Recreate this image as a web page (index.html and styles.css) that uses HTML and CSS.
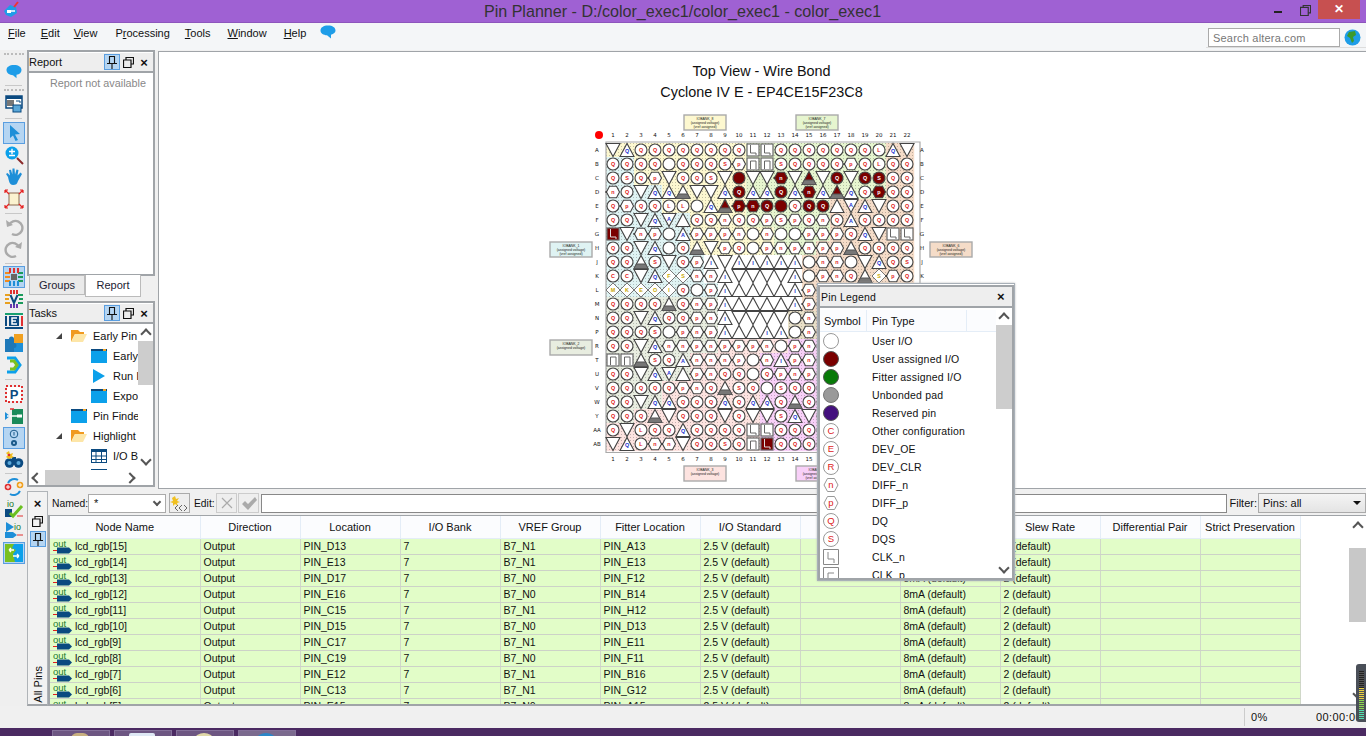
FILE: index.html
```html
<!DOCTYPE html>
<html lang="en">
<head>
<meta charset="utf-8">
<title>Pin Planner</title>
<link rel="stylesheet" href="styles.css">
</head>
<body>
<header class="titlebar">
  <svg class="app-logo" width="18" height="18" viewBox="0 0 18 18"><path d="M2 10 L8 4 L14 6 L15 12 L9 16 L4 14Z" fill="#1e9de8"/><rect x="5" y="9" width="4" height="3" fill="#fff"/><path d="M9 10h4" stroke="#fff" stroke-width="1.5"/><path d="M12 6 L16 1" stroke="#e33" stroke-width="2"/></svg>
  <div class="title-text">Pin Planner - D:/color_exec1/color_exec1 - color_exec1</div>
  <div class="win-btns">
    <span class="win-min"></span>
    <svg class="win-restore" width="11" height="11" viewBox="0 0 12 12"><path d="M3.5 2.5V.5h8v8h-2M.5 2.500h8.500v9h-8.500z" fill="none" stroke="#333" stroke-width="1.300"/></svg>
    <span class="win-close">✕</span>
  </div>
</header>

<nav class="menubar">
  <span class="menu-item"><u>F</u>ile</span>
  <span class="menu-item"><u>E</u>dit</span>
  <span class="menu-item"><u>V</u>iew</span>
  <span class="menu-item">P<u>r</u>ocessing</span>
  <span class="menu-item"><u>T</u>ools</span>
  <span class="menu-item"><u>W</u>indow</span>
  <span class="menu-item"><u>H</u>elp</span>
  <svg class="chat" width="16" height="14" viewBox="0 0 16 14"><path d="M8 .5C3.500.5.500 2.500.500 5.500S3.500 10 7 10.300L11 13.500V9.800C13.800 9 15.500 7.500 15.500 5.500 15.500 2.500 12.500.5 8 .5Z" fill="#1e9de8"/></svg>
  <div class="search-wrap">
    <div class="search-box">Search altera.com</div>
    <svg width="17" height="17" viewBox="0 0 17 17"><circle cx="8.500" cy="8.500" r="8" fill="#1e9de8"/><path d="M5 3 L11 2 L12 6 L9 8 L10 12 L8 14 L6 9 L3 7Z" fill="#3c9a2e"/></svg>
  </div>
</nav>

<div class="workspace">
  <aside class="toolbar">
    <div class="grip"></div>
    <div class="tool"><svg viewBox="0 0 20 20"><path d="M10 4C5.500 4 2.500 6 2.500 9s3 5 6.500 5.300l3.500 3v-3.600C15.500 13.500 17.500 11.500 17.500 9c0-3-3-5-7.500-5Z" fill="#1e9de8"/></svg></div>
    <div class="sep"></div>
    <div class="grip g2"></div>
    <div class="tool"><svg viewBox="0 0 20 20"><rect x="2" y="2" width="16" height="12" fill="#fff" stroke="#0b4a80" stroke-width="1.500"/><rect x="2" y="2" width="16" height="3" fill="#0b4a80"/><rect x="3" y="6" width="7" height="6" fill="#777"/><rect x="9" y="11" width="8" height="7" fill="#5aa7d8" stroke="#0b4a80"/><path d="M12 7h4v2" fill="none" stroke="#0b4a80"/></svg></div>
    <div class="sep w7"></div>
    <div class="tool on"><svg viewBox="0 0 20 20"><path d="M6 2 L16 11 L11 11.500 L14 17 L11.500 18 L9 12.500 L6 15Z" fill="#1e8fd8"/></svg></div>
    <div class="tool"><svg viewBox="0 0 20 20"><circle cx="8" cy="8" r="6.500" fill="#0ca0ea"/><path d="M5 6.500h6M8 3.800v5.400M5 10.500h6" stroke="#fff" stroke-width="1.400"/><path d="M13 13 L19 19" stroke="#8a2a2a" stroke-width="2"/></svg></div>
    <div class="tool"><svg viewBox="0 0 20 20"><path d="M4 10 L2 7 L3.500 6 L6 8.500 L5 3 L7 2.800 L8.300 7.500 L8.500 1.500 L10.500 1.500 L11 7.500 L12.500 2.500 L14.500 3 L13.500 8.500 L16.500 5.500 L18 7 L14 14 C13 17 12 18 9 18 C6 18 5 15 4 10Z" fill="#1e8fd8"/></svg></div>
    <div class="tool"><svg viewBox="0 0 20 20"><rect x="5" y="4" width="10" height="12" fill="#fbf3d0" stroke="#8a6a50"/><path d="M1 1l4 4M1 1h3M1 1v3M19 1l-4 4M19 1h-3M19 1v3M1 19l4-4M1 19h3M1 19v-3M19 19l-4-4M19 19h-3M19 19v-3" stroke="#e52222" fill="none" stroke-width="1.200"/></svg></div>
    <div class="sep"></div>
    <div class="tool"><svg viewBox="0 0 20 20"><path d="M5 8 A7 7 0 1 1 8 17" fill="none" stroke="#aaa" stroke-width="2.400"/><path d="M2 3 L3 10 L9 8Z" fill="#aaa"/></svg></div>
    <div class="tool"><svg viewBox="0 0 20 20"><path d="M15 8 A7 7 0 1 0 12 17" fill="none" stroke="#aaa" stroke-width="2.400"/><path d="M18 3 L17 10 L11 8Z" fill="#aaa"/></svg></div>
    <div class="sep"></div>
    <div class="tool on"><svg viewBox="0 0 20 20"><rect x="7" y="7" width="6" height="6" fill="#666"/><path d="M1 6h5M1 10h5M1 14h5" stroke="#f08a1e" stroke-width="2"/><path d="M14 6h5M14 10h5M14 14h5" stroke="#1a9a5a" stroke-width="2"/><path d="M6 1v5M10 1v5M14 1v5" stroke="#e03030" stroke-width="2"/><path d="M6 14v5M10 14v5M14 14v5" stroke="#1e8fd8" stroke-width="2"/></svg></div>
    <div class="tool"><svg viewBox="0 0 20 20"><path d="M1 6h5M1 10h4M1 14h5" stroke="#e8a020" stroke-width="2"/><path d="M14 6h5M15 10h4M14 14h5" stroke="#1a9a5a" stroke-width="2"/><path d="M7 1v4M10 1v4M13 1v4" stroke="#e03030" stroke-width="2"/><path d="M7 15v4M10 15v4M13 15v4" stroke="#6a3ab0" stroke-width="2"/><path d="M6.500 6 L10 14 L13.500 6" fill="none" stroke="#0b4a80" stroke-width="2"/></svg></div>
    <div class="tool"><svg viewBox="0 0 20 20"><rect x="1" y="2" width="18" height="2" fill="#18a070"/><rect x="1" y="16" width="18" height="2" fill="#0b4a80"/><rect x="1" y="5" width="2" height="10" fill="#0b4a80"/><rect x="17" y="5" width="2" height="10" fill="#e03030"/><rect x="5" y="5" width="10" height="10" fill="#0b4a80"/><path d="M13 7H8v6h5M8 10h4" fill="none" stroke="#fff" stroke-width="1.500"/></svg></div>
    <div class="tool"><svg viewBox="0 0 20 20"><rect x="10" y="1" width="9" height="9" fill="#f0a020"/><rect x="10" y="10" width="9" height="9" fill="#1e8fd8"/><path d="M1 6h4a2.500 2.500 0 0 1 5 0h0v4a2.500 2.500 0 0 1 0 5v4H1Z" fill="#1e78b8"/></svg></div>
    <div class="tool"><svg viewBox="0 0 20 20"><path d="M3 3h8l5 7-5 7H3" fill="none" stroke="#0ca0ea" stroke-width="3"/><path d="M6 6h4l3 4-3 4H6" fill="none" stroke="#7ac020" stroke-width="3"/></svg></div>
    <div class="sep w7"></div>
    <div class="tool"><svg viewBox="0 0 20 20"><rect x="3" y="3" width="14" height="14" fill="#fff"/><path d="M2 2h16v16H2z" fill="none" stroke="#e03030" stroke-dasharray="2 2" stroke-width="2"/><text x="10" y="15" class="ico-p">P</text></svg></div>
    <div class="tool"><svg viewBox="0 0 20 20"><rect x="8" y="3" width="11" height="15" fill="#1a8a5a"/><path d="M1 6l5 4-5 4z" fill="#1e8fd8"/><path d="M3 10h13" stroke="#fff" stroke-width="1.500"/><rect x="13" y="8.500" width="5" height="3" fill="#fff"/><path d="M6 3h4" stroke="#e03030" stroke-width="1.500"/></svg></div>
    <div class="tool on"><svg viewBox="0 0 20 20"><circle cx="10" cy="6" r="3.800" fill="none" stroke="#1a5a8a"/><path d="M10 4v3.500" stroke="#1a5a8a"/><circle cx="10" cy="15" r="3" fill="#1a5a8a"/><circle cx="10" cy="15" r="1" fill="#b5d5f2"/></svg></div>
    <div class="tool"><svg viewBox="0 0 20 20"><circle cx="5.500" cy="13" r="4.800" fill="#0b4a80"/><circle cx="14.500" cy="13" r="4.800" fill="#0b4a80"/><circle cx="5.500" cy="13" r="2" fill="#5aa7d8"/><circle cx="14.500" cy="13" r="2" fill="#5aa7d8"/><rect x="8" y="7" width="4" height="6" fill="#0b4a80"/><path d="M5 1l1 3 3-1-1 3 2 1-5 2-3-2 2-2-2-2z" fill="#f0c020"/><circle cx="5" cy="5" r="1.300" fill="#e03030"/></svg></div>
    <div class="sep short"></div>
    <div class="tool"><svg viewBox="0 0 20 20"><path d="M4 6 A7 7 0 0 1 14 3" fill="none" stroke="#1e8fd8" stroke-width="2"/><path d="M16 14 A7 7 0 0 1 6 17" fill="none" stroke="#1e8fd8" stroke-width="2"/><circle cx="4" cy="10" r="3.300" fill="#e03030"/><path d="M2 10h4M4 8v4" stroke="#fff"/><circle cx="16" cy="8" r="3.300" fill="#f0a020"/><path d="M14 8h4M16 6v4" stroke="#fff"/></svg></div>
    <div class="tool"><svg viewBox="0 0 20 20"><text x="3" y="8" class="ico-io">io</text><path d="M1 10h7v8H1z" fill="#0b4a80"/><path d="M6 14 L9 17 L18 7" fill="none" stroke="#6ac020" stroke-width="3"/><path d="M13 17h6" stroke="#e03030"/></svg></div>
    <div class="tool"><svg viewBox="0 0 20 20"><path d="M2 1l8 5-8 5z" fill="#1e8fd8"/><text x="10" y="9" class="ico-io">io</text><path d="M1 11h8l4 3-4 3H1z" fill="#1e8fd8"/><path d="M13 14h6" stroke="#e03030"/></svg></div>
    <div class="tool on"><svg viewBox="0 0 20 20"><rect x="1" y="1" width="18" height="18" fill="#0ca0ea"/><path d="M1 1h9l-2 4 4 2-3 4 2 8H1z" fill="#7ac020"/><path d="M10 7H5M5 7l2-2M5 7l2 2M9 13h6M15 13l-2-2M15 13l-2 2" stroke="#fff" stroke-width="1.300" fill="none"/></svg></div>
  </aside>

  <div class="main">
    <div class="upper">
      <div class="leftcol">
        <section class="panel report">
          <div class="panel-head">
            <span class="panel-title">Report</span>
            <span class="pb on"><svg width="10" height="14" viewBox="0 0 10 14"><path d="M2.500 1.500h5v7h-5zM0 8.500h10M5 8.500V14" fill="none" stroke="#111" stroke-width="1.100"/></svg></span>
            <span class="pb"><svg width="11" height="11" viewBox="0 0 11 11"><path d="M3 3V.5h7.500V7H8M.5 3h7.500v7.500H.5z" fill="none" stroke="#111" stroke-width="1.200"/></svg></span>
            <span class="pb close">×</span>
          </div>
          <div class="report-body">Report not available</div>
        </section>
        <div class="tabs"><span class="tab">Groups</span><span class="tab active">Report</span></div>
        <section class="panel tasks">
          <div class="panel-head">
            <span class="panel-title">Tasks</span>
            <span class="pb on"><svg width="10" height="14" viewBox="0 0 10 14"><path d="M2.500 1.500h5v7h-5zM0 8.500h10M5 8.500V14" fill="none" stroke="#111" stroke-width="1.100"/></svg></span>
            <span class="pb"><svg width="11" height="11" viewBox="0 0 11 11"><path d="M3 3V.5h7.500V7H8M.5 3h7.500v7.500H.5z" fill="none" stroke="#111" stroke-width="1.200"/></svg></span>
            <span class="pb close">×</span>
          </div>
          <div class="tree-area">
            <div class="tree-view">
              <div class="tree-list">
                <div class="tree-row lvl1"><span class="tw"></span><svg class="ti" viewBox="0 0 16 14"><path d="M0 1h7l2 2h4v2H4L0 13z" fill="#f09a20"/><path d="M4 5h12l-4 8H0z" fill="#fde6a8"/></svg><span>Early Pin Planning</span></div>
                <div class="tree-row lvl2"><svg class="ti" viewBox="0 0 16 14"><rect width="16" height="14" fill="#0ca0ea"/><rect width="16" height="2" fill="#0b4a80"/><rect x="12" width="3" height="2" fill="#f0a020"/></svg><span>Early Pin</span></div>
                <div class="tree-row lvl2"><svg class="ti" viewBox="0 0 16 14"><path d="M2 0 L14 7 L2 14Z" fill="#0ca0ea"/></svg><span>Run I/O</span></div>
                <div class="tree-row lvl2"><svg class="ti" viewBox="0 0 16 14"><rect width="16" height="14" fill="#0ca0ea"/><rect width="16" height="2" fill="#0b4a80"/><rect x="12" width="3" height="2" fill="#f0a020"/></svg><span>Export</span></div>
                <div class="tree-row lvl1b"><svg class="ti" viewBox="0 0 16 14"><rect width="16" height="14" fill="#0ca0ea"/><rect width="16" height="2" fill="#0b4a80"/><rect x="12" width="3" height="2" fill="#f0a020"/></svg><span>Pin Finder</span></div>
                <div class="tree-row lvl1"><span class="tw"></span><svg class="ti" viewBox="0 0 16 14"><path d="M0 1h7l2 2h4v2H4L0 13z" fill="#f09a20"/><path d="M4 5h12l-4 8H0z" fill="#fde6a8"/></svg><span>Highlight Pins</span></div>
                <div class="tree-row lvl2"><svg class="ti" viewBox="0 0 16 14"><rect x=".5" y=".5" width="15" height="13" fill="#fff" stroke="#0b4a80"/><rect width="16" height="3" fill="#0b4a80"/><path d="M0 7h16M0 10.500h16M5 3v11M10.500 3v11" stroke="#0b4a80"/></svg><span>I/O Banks</span></div>
                <div class="tree-row lvl2"><svg class="ti" viewBox="0 0 16 14"><rect width="16" height="2" fill="#0b4a80"/></svg><span>VREF</span></div>
              </div>
              <div class="vbar"><span class="arr"></span><span class="thumb"></span><span class="fill"></span><span class="arr dn"></span></div>
            </div>
            <div class="hbar"><span class="harr"></span><span class="hthumb"></span><span class="hfill"></span><span class="harr rt"></span></div>
          </div>
        </section>
      </div>
      <section class="canvas">
        <div class="canvas-title">Top View - Wire Bond</div>
        <div class="canvas-title">Cyclone IV E - EP4CE15F23C8</div>
        <svg id="pkg" class="pkg" width="440" height="380" viewBox="543 105 440 380"></svg>
      </section>
    </div>

    <section class="lower">
      <div class="side">
        <span class="pb close">×</span>
        <span class="pb"><svg width="11" height="11" viewBox="0 0 11 11"><path d="M3 3V.5h7.500V7H8M.5 3h7.500v7.500H.5z" fill="none" stroke="#111" stroke-width="1.200"/></svg></span>
        <span class="pb on"><svg width="10" height="14" viewBox="0 0 10 14"><path d="M2.500 1.500h5v7h-5zM0 8.500h10M5 8.500V14" fill="none" stroke="#111" stroke-width="1.100"/></svg></span>
        <span class="all-pins">All Pins</span>
      </div>
      <div class="lower-main">
        <div class="filterbar">
          <span class="lbl named">Named:</span>
          <div class="combo"><span>*</span><span class="chev"></span></div>
          <span class="fbtn wiz"><svg width="19" height="17" viewBox="0 0 19 17"><path d="M5 1l1 3 3-1-2 3 3 1-3 1 1 3-3-2-2 2V8L0 7l3-1-1-3z" fill="#f0c020"/><path d="M8 10l-3 3 3 3M12 10l-3 3 3 3M14 10l3 3-3 3" fill="none" stroke="#666"/></svg></span>
          <span class="lbl edit">Edit:</span>
          <span class="fbtn dim"><svg width="14" height="14" viewBox="0 0 14 14"><path d="M2 2l10 10M12 2L2 12" stroke="#aaa" stroke-width="1.200"/></svg></span>
          <span class="fbtn dim"><svg width="16" height="14" viewBox="0 0 16 14"><path d="M1 8l3-3 3 3 7-7 2 3-9 10z" fill="#aaa"/></svg></span>
          <div class="edit-input"></div>
          <span class="lbl">Filter:</span>
          <div class="filter-select"><span>Pins: all</span><span class="caret"></span></div>
        </div>
        <div class="grid-wrap">
          <div class="grid-area">
            <table class="grid">
              <thead><tr><th>Node Name</th><th>Direction</th><th>Location</th><th>I/O Bank</th><th>VREF Group</th><th>Fitter Location</th><th>I/O Standard</th><th>Reserved</th><th>Current Strength</th><th>Slew Rate</th><th>Differential Pair</th><th>Strict Preservation</th></tr></thead>
              <tbody id="rows"></tbody>
            </table>
          </div>
          <div class="vbar big"><span class="arr"></span><span class="thumb"></span><span class="fill"></span><span class="arr dn"></span></div>
        </div>
      </div>
    </section>

    <div class="legend">
      <div class="legend-head"><span>Pin Legend</span><span class="pb close">×</span></div>
      <div class="legend-body">
        <div class="legend-list">
          <div class="legend-cols"><span class="lc1">Symbol</span><span class="lc2">Pin Type</span><span class="lc3"></span></div>
          <div class="lr"><span class="sym"></span>User I/O</div>
          <div class="lr"><span class="sym s-red"></span>User assigned I/O</div>
          <div class="lr"><span class="sym s-green"></span>Fitter assigned I/O</div>
          <div class="lr"><span class="sym s-gray"></span>Unbonded pad</div>
          <div class="lr"><span class="sym s-purple"></span>Reserved pin</div>
          <div class="lr"><span class="sym">C</span>Other configuration</div>
          <div class="lr"><span class="sym">E</span>DEV_OE</div>
          <div class="lr"><span class="sym">R</span>DEV_CLR</div>
          <div class="lr"><span class="sym hex"><svg viewBox="0 0 16 16"><path d="M1 8l3.500-6.500h7L15 8l-3.500 6.500h-7z" fill="#fff" stroke="#999"/></svg><b>n</b></span>DIFF_n</div>
          <div class="lr"><span class="sym hex"><svg viewBox="0 0 16 16"><path d="M1 8l3.500-6.500h7L15 8l-3.500 6.500h-7z" fill="#fff" stroke="#999"/></svg><b>p</b></span>DIFF_p</div>
          <div class="lr"><span class="sym">Q</span>DQ</div>
          <div class="lr"><span class="sym">S</span>DQS</div>
          <div class="lr"><span class="sym hex"><svg viewBox="0 0 16 16"><path d="M.5.5h15v15H.5zM5 3v7h6v4" fill="none" stroke="#888"/></svg></span>CLK_n</div>
          <div class="lr"><span class="sym hex"><svg viewBox="0 0 16 16"><path d="M.5.5h15v15H.5zM5 14V6h6" fill="none" stroke="#888"/></svg></span>CLK_p</div>
        </div>
        <div class="vbar leg"><span class="arr"></span><span class="thumb"></span><span class="fill"></span><span class="arr dn"></span></div>
      </div>
    </div>
  </div>
</div>

<footer class="statusbar"><span class="pct">0%</span><span class="time">00:00:00</span></footer>
<div class="taskbar"><span class="task"></span><span class="task"></span><span class="task"></span><span class="task cur"></span></div>
<div class="meter"><span class="m-dark"></span><span class="m-yellow"></span><span class="m-green"></span><span class="m-cyan"></span></div>
<script src="pins.js"></script>
</body>
</html>
```
FILE: styles.css
```css
* { box-sizing: border-box; }
html, body { margin: 0; height: 736px; }
body { position: relative; width: 1366px; overflow: hidden; background: #f0f0f0; font: 11px "Liberation Sans", Arial, sans-serif; color: #111; display: flex; flex-direction: column; }

.titlebar { height: 23px; background: #9f61d3; border-bottom: 1px solid #8d55bd; display: flex; align-items: center; flex: none; }
.app-logo { margin-left: 2px; flex: none; margin-top: -2px; }
.title-text { flex: 1; text-align: center; font-size: 16.100px; color: #333; padding-left: 71px; }
.win-btns { display: flex; align-items: flex-start; height: 22px; width: 92px; flex: none; }
.win-min { width: 8px; height: 2px; background: #222; margin: 11px 18px 0 0; flex: none; }
.win-restore { margin: 5px 7px 0 0; flex: none; }
.win-close { width: 42px; height: 19px; background: #c75050; color: #fff; text-align: center; font-size: 12px; line-height: 19px; font-weight: bold; flex: none; }

.menubar { height: 27px; background: #f4f6f8; display: flex; align-items: center; flex: none; padding-left: 8px; padding-bottom: 8px; }
.menu-item:nth-child(1) { margin-right: 15px; }
.menu-item:nth-child(2) { margin-right: 14px; }
.menu-item:nth-child(3) { margin-right: 18px; }
.menu-item:nth-child(4) { margin-right: 15px; }
.menu-item:nth-child(5) { margin-right: 17px; }
.menu-item:nth-child(6) { margin-right: 17px; }
.menu-item:nth-child(7) { margin-right: 16px; }
.chat { margin-top: -2px; margin-left: -2px; }
.search-wrap { margin-left: auto; display: flex; align-items: center; gap: 4px; padding: 2px 5px 0 2px; border-bottom: 1px solid #ddd; margin-top: 8px; }
.search-box { width: 132px; height: 19px; background: #fff; border: 1px solid #aaa; color: #777; padding: 3px 4px; letter-spacing: .2px; }

.workspace { position: relative; flex: none; height: 656px; display: flex; }
.toolbar { width: 27px; flex: none; display: flex; flex-direction: column; align-items: center; background: #efefef; padding-top: 1px; }
.grip { height: 7px; width: 20px; flex: none; border-top: 2px dotted #bbb; margin-top: 2px; }
.grip.g2 { height: 4px; margin-top: 1px; }
.tool { width: 22px; height: 22px; flex: none; display: flex; align-items: center; justify-content: center; border: 1px solid transparent; }
.tool svg { width: 20px; height: 20px; flex: none; }
.tool.on { background: #b5d5f2; border-color: #5a9ee0; }
.sep { height: 1px; width: 17px; background: #c8c8c8; margin: 3px 0 2px; flex: none; }
.sep.w7 { margin: 3px 0; }
.sep.short { margin: 2px 0; }
.ico-p { font: bold 13px "Liberation Sans", sans-serif; fill: #0b4a80; text-anchor: middle; }
.ico-io { font: 9px "Liberation Sans", sans-serif; fill: #1a7a2a; }

.main { flex: 1; display: flex; flex-direction: column; min-width: 0; }
.upper { height: 439px; display: flex; flex: none; }
.leftcol { width: 128px; flex: none; display: flex; flex-direction: column; margin-right: 3px; }
.panel { border: 2px solid #a0a4a8; background: #fff; display: flex; flex-direction: column; }
.panel-head { height: 21px; background: #eee; border-bottom: 2px solid #a0a4a8; display: flex; align-items: center; flex: none; border-top: 1px solid #fff; padding-right: 1px; }
.panel-title { flex: 1; }
.pb { width: 16px; height: 16px; display: flex; align-items: center; justify-content: center; flex: none; }
.pb.on { background: #b5d5f2; border: 1px solid #5a9ee0; }
.pb.close { font: bold 13px "Liberation Sans", sans-serif; }
.report { height: 226px; flex: none; }
.report-body { padding: 4px 7px 0 0; text-align: right; color: #888; font-size: 10.800px; }
.tabs { height: 24px; flex: none; display: flex; padding-left: 2px; align-items: flex-start; margin-top: -1px; }
.tab { width: 56px; height: 20px; background: #eaeaea; border: 1px solid #bbb; text-align: center; line-height: 18px; margin-top: 0; color: #223; }
.tab.active { background: #fff; height: 22px; border-top: 0; margin-top: 0; line-height: 21px; }
.tasks { height: 186px; flex: none; margin-top: 2px; }
.tree-area { flex: 1; display: flex; flex-direction: column; min-height: 0; }
.tree-view { flex: 1; display: flex; min-height: 0; }
.tree-list { flex: 1; overflow: hidden; padding-top: 2px; min-width: 0; }
.tree-row { height: 20px; display: flex; align-items: center; white-space: nowrap; }
.lvl1 { padding-left: 27px; }
.lvl1b { padding-left: 42px; }
.lvl2 { padding-left: 62px; }
.tw { width: 0; height: 0; border-left: 6px solid transparent; border-bottom: 6px solid #444; margin-right: 9px; }
.ti { width: 16px; height: 14px; flex: none; margin-right: 6px; }
.vbar { width: 15px; flex: none; display: flex; flex-direction: column; align-items: stretch; background: #fff; }
.arr { height: 17px; flex: none; display: flex; align-items: center; justify-content: center; }
.arr::before { content: ""; width: 6px; height: 6px; border-left: 2px solid #555; border-top: 2px solid #555; transform: rotate(45deg); margin-top: 3px; }
.arr.dn::before { transform: rotate(225deg); margin-top: -3px; }
.thumb { height: 44px; background: #cdcdcd; flex: none; }
.fill { flex: 1; }
.hbar { height: 15px; flex: none; display: flex; align-items: center; margin-right: 15px; }
.harr { width: 16px; height: 15px; flex: none; display: flex; align-items: center; justify-content: center; }
.harr::before { content: ""; width: 6px; height: 6px; border-left: 2px solid #555; border-top: 2px solid #555; transform: rotate(-45deg); }
.harr.rt::before { transform: rotate(135deg); }
.hthumb { width: 35px; height: 15px; background: #cdcdcd; }
.hfill { flex: 1; }
.canvas { flex: 1; background: #fff; border: 1px solid #a0a4a8; border-right: 0; margin-top: 1px; padding: 9px 2px 0 0; text-align: center; overflow: hidden; }
.canvas-title { font-size: 14.400px; line-height: 21px; color: #111; }
.pkg { display: block; margin: 3px auto 0; }

.lower { flex: 1; display: flex; min-height: 0; }
.side { width: 21px; flex: none; border: 1px solid #b0b4b8; border-bottom: 2px solid #a0a4a8; background: #f2f2f2; display: flex; flex-direction: column; align-items: center; padding-top: 3px; gap: 2px; margin-top: 2px; }
.all-pins { margin-top: auto; writing-mode: vertical-rl; transform: rotate(180deg); padding-top: 1px; }
.lower-main { flex: 1; display: flex; flex-direction: column; min-width: 0; }
.filterbar { height: 26px; display: flex; align-items: center; flex: none; padding: 2px 0 0 4px; }
.lbl { flex: none; }
.lbl.named { width: 36px; font-size: 10.300px; white-space: nowrap; }
.lbl.edit { margin: 0 2px 0 4px; width: 20px; font-size: 10.300px; }
.combo { width: 78px; height: 19px; background: #fff; border: 1px solid #aaa; display: flex; justify-content: space-between; padding: 2px 5px; align-items: center; flex: none; }
.chev { width: 6px; height: 6px; border-right: 2px solid #555; border-bottom: 2px solid #555; transform: rotate(45deg); margin-top: -3px; }
.fbtn { width: 21px; height: 20px; border: 1px solid #aaa; background: #eee; display: flex; align-items: center; justify-content: center; flex: none; }
.fbtn.wiz { margin-left: 3px; }
.fbtn.dim { border-color: #ccc; margin-right: 1px; }
.edit-input { flex: 1; height: 19px; background: #fff; border: 1px solid #888; margin: 0 3px 0 1px; }
.filter-select { width: 108px; height: 20px; background: linear-gradient(#f4f4f4, #e4e4e4); border: 1px solid #aaa; margin-left: 1px; display: flex; align-items: center; justify-content: space-between; padding: 0 4px; flex: none; }
.caret { border: 4px solid transparent; border-top: 4px solid #111; margin-top: 4px; }
.grid-wrap { flex: 1; min-height: 0; display: flex; background: #fff; border-top: 1px solid #a0a4a8; border-bottom: 2px solid #a0a4a8; border-left: 2px solid #a0a4a8; }
.grid-area { flex: 1; overflow: hidden; min-width: 0; }
.grid { table-layout: fixed; width: 1250px; border-collapse: collapse; }
.grid th { font-weight: normal; height: 22px; width: 100px; background: #fbfcfe; border-right: 1px solid #e4edf7; border-bottom: 1px solid #e4edf7; padding: 0; color: #111; }
.grid th:first-child { width: 150px; }
.grid td { height: 16px; padding: 0 3px; background: #e2fdc8; border-right: 1px solid #d0d8c8; border-bottom: 1px solid #cdd2c8; white-space: nowrap; overflow: hidden; font-size: 10.500px; }
.node { display: flex; align-items: center; height: 15px; }
.out-ico { width: 20px; height: 15px; flex: none; margin-right: 2px; }
.out-t { font: 9.500px "Liberation Sans", sans-serif; fill: #1a7a2a; }
.vbar.big { width: 17px; }
.vbar.big .thumb { height: 74px; background: #c8c8c8; margin-top: 14px; }
.vbar.big .arr { height: 18px; }

.legend { position: absolute; left: 817px; top: 233px; width: 198px; height: 298px; background: #fff; border: 1px solid #a8b0b8; padding: 1px 0 0; box-shadow: 0 0 2px #bbb; }
.legend-head { height: 21px; background: #eee; display: flex; align-items: center; justify-content: space-between; padding: 0 3px 0 1px; font-size: 10.500px; letter-spacing: .2px; border: 2px solid #a0a4a8; border-bottom: 0; }
.legend-body { display: flex; height: 274px; border: 2px solid #a0a4a8; }
.legend-list { flex: 1; overflow: hidden; min-width: 0; }
.legend-cols { height: 22px; display: flex; align-items: center; background: #fbfcfe; border-bottom: 1px solid #e4edf7; margin-top: 2px; }
.lc1 { width: 47px; padding-left: 4px; height: 100%; line-height: 22px; border-right: 1px solid #e4edf7; }
.lc2 { width: 100px; padding-left: 5px; height: 100%; line-height: 22px; border-right: 1px solid #e4edf7; }
.lr { height: 18px; display: flex; align-items: center; font-size: 10.500px; letter-spacing: .2px; padding-left: 3px; }
.sym { width: 16px; height: 16px; border-radius: 50%; border: 1px solid #999; color: #d22; text-align: center; font-size: 9.500px; line-height: 14px; margin-right: 33px; position: relative; flex: none; }
.s-red { background: #7a0000; border-color: #555; }
.s-green { background: #087a08; border-color: #555; }
.s-gray { background: #999; border-color: #777; }
.s-purple { background: #44107e; border-color: #555; }
.sym.hex { border: 0; border-radius: 0; }
.sym.hex svg { position: absolute; left: 0; top: 0; width: 16px; height: 16px; }
.sym.hex b { position: relative; font-weight: normal; line-height: 16px; }
.vbar.leg { width: 16px; }
.vbar.leg .thumb { height: 84px; }
.vbar.leg .arr { height: 17px; }

.statusbar { height: 22px; flex: none; background: #f0f0f0; display: flex; justify-content: flex-end; align-items: center; overflow: hidden; }
.pct { border-left: 1px solid #ccc; padding-left: 6px; width: 72px; line-height: 18px; letter-spacing: .4px; }
.time { width: 50px; white-space: nowrap; letter-spacing: .4px; overflow: hidden; }
.taskbar { flex: 1; background: #4b2a62; display: flex; gap: 4px; padding: 2px 0 0 52px; }
.task { width: 58px; background: #6d5682; border: 1px solid #84709a; border-bottom: 0; position: relative; overflow: hidden; }
.task::after { content: ""; position: absolute; left: 18px; top: 2px; width: 18px; height: 12px; border-radius: 6px 6px 0 0; background: #c8b080; }
.task:nth-child(2)::after { background: #dfe9f5; left: 14px; width: 26px; border-radius: 2px; }
.task:nth-child(3)::after { background: #e0d8a8; border-radius: 50%; }
.task.cur { background: #7b6a8e; }
.task.cur::after { background: #2a86c8; border-radius: 50%; }
.meter { position: absolute; left: 1356px; top: 664px; width: 10px; height: 58px; background: #4a4f58; border-radius: 3px 0 0 3px; display: flex; flex-direction: column; padding: 7px 2px 1px 3px; }
.m-dark { height: 17px; background: repeating-linear-gradient(#222 0 1px, #555 1px 2px); }
.m-yellow { height: 12px; background: repeating-linear-gradient(#e8d040 0 1px, #555 1px 2px); }
.m-green { height: 10px; background: repeating-linear-gradient(#8ad850 0 1px, #555 1px 2px); }
.m-cyan { height: 9px; background: repeating-linear-gradient(#50e0b0 0 1px, #555 1px 2px); }
.pl { font: bold 5.400px "Liberation Sans", sans-serif; text-anchor: middle; }
.ax { font: 5.500px "DejaVu Sans", sans-serif; text-anchor: middle; fill: #111; }
.bl { font: 3.500px "Liberation Sans", sans-serif; text-anchor: middle; fill: #222; }
```
FILE: pins.js
```js
var rowsData = [
  ["lcd_rgb[15]","PIN_D13","B7_N1","PIN_A13"],["lcd_rgb[14]","PIN_E13","B7_N1","PIN_E13"],
  ["lcd_rgb[13]","PIN_D17","B7_N0","PIN_F12"],["lcd_rgb[12]","PIN_E16","B7_N0","PIN_B14"],
  ["lcd_rgb[11]","PIN_C15","B7_N1","PIN_H12"],["lcd_rgb[10]","PIN_D15","B7_N0","PIN_D13"],
  ["lcd_rgb[9]","PIN_C17","B7_N1","PIN_E11"],["lcd_rgb[8]","PIN_C19","B7_N0","PIN_F11"],
  ["lcd_rgb[7]","PIN_E12","B7_N1","PIN_B16"],["lcd_rgb[6]","PIN_C13","B7_N1","PIN_G12"],
  ["lcd_rgb[5]","PIN_E15","B7_N0","PIN_A15"]
];
var outIco = '<svg class="out-ico" viewBox="0 0 20 15"><text x="0" y="7.500" class="out-t">out</text><path d="M0 11.500h4" stroke="#e02020"/><path d="M4 8.500h12l3 3-3 3H4z" fill="#0b4a80"/></svg>';
document.getElementById("rows").innerHTML = rowsData.map(function (r) {
  return "<tr><td><div class='node'>" + outIco + r[0] + "</div></td><td>Output</td><td>" + r[1] +
    "</td><td>7</td><td>" + r[2] + "</td><td>" + r[3] + "</td><td>2.5 V (default)</td><td></td><td>8mA (default)</td><td>2 (default)</td><td></td><td></td></tr>";
}).join("");

var ROWS = ["A","B","C","D","E","F","G","H","J","K","L","M","N","P","R","T","U","V","W","Y","AA","AB"];
var PINS = [
 "v ^ q q q q q q q q K K q q q q q q q l ^ v",
 "q q q q u q q q s p K K s q q q q p q l q q",
 "q s q p v q q s v U v v N v D v Q v Q S q q",
 "n q v ^ ^ T v v ^ Q ^ ^ Q ^ N ^ D ^ q P q q",
 "q p q q l l u ^ D P N Q U q Q Q _ x ^ v q q",
 "q q v ^ x _ q q n q q p s p q n q A q q q q",
 "B v n p u A p p p n u n u u p p p q ^ v K K",
 "q q v ^ u q T v p q u p n p n p p T q q q q",
 "q q T s v q p I v I I I I I u n n u v ^ q s",
 "c c v ^ dF dS n n I v v v v I u p n q T dS p q",
 "dM dK dE dO dI q u p I _ _ _ _ I p q q q q q q q",
 "q q q q T q n p I _ _ _ _ I p q q q q q q q",
 "q q v ^ q q p n I v v v v u n q q q q q q q",
 "q q q s u p n p I _ _ I I u n q q q q q q q",
 "q q v ^ n n p n p p p n u p n q q q q q q q",
 "K K T s q A n n n p u n I p n q q q q q q q",
 "q q v ^ x _ p n q q u q p n p q q q q q q q",
 "q q q q q p n q T s q u s q q q q q q q q q",
 "q q v ^ ^ q q q ^ q ^ ^ q T q q q q q q q q",
 "q q q T v q q q v q v v s ^ v q q q q q q q",
 "q v l q q ^ q q q q K K q q q q q q q q q q",
 "v ^ l n n v q q s q K B q q q q q q q q q q"
];
function expand(spec) {
  var out = [];
  spec.split(" ").forEach(function (p) {
    var c = p[0], n = parseInt(p.slice(1), 10);
    for (var i = 0; i < n; i++) out.push(c);
  });
  return out;
}
var BANKS = [
 "y10 g10 h2","c2 y8 g10 h2","c2 y8 g10 h2","c4 y6 g10 h2","c4 y6 g6 h6","c6 y4 g6 h6",
 "c6 y6 g4 h6","c6 y6 g3 h7","c7 w7 h8","c7 w7 h8","c8 w6 h8","e8 w6 h8","e8 w5 t2 h7","e8 w5 t2 h7",
 "e8 k5 m9","e6 k5 m11","e6 k5 m11","e4 k7 m11","e4 k7 m11","e2 k9 m11","k11 m11","k11 m11"
].map(expand);
var COLORS = { y:"#fdf8d0", g:"#e6f5cf", c:"#dff3f3", h:"#f5dcc8", e:"#e8ede0", w:"#ffffff", t:"#e8e0c8", k:"#fde3e0", m:"#f8d0f8" };
var X0 = 614, Y0 = 149, P = 14;
var s = [];
s.push('<defs><pattern id="dots" width="3" height="3" patternUnits="userSpaceOnUse"><rect x="1" y="1" width="1" height="1" fill="#000" opacity=".22"/></pattern></defs>');
BANKS.forEach(function (row, r) {
  row.forEach(function (b, c) {
    var x = X0 + c * P - 7, y = Y0 + r * P - 7;
    s.push('<rect x="' + x + '" y="' + y + '" width="14.2" height="14.2" fill="' + COLORS[b] + '"/>');
    if (b !== "w") s.push('<rect x="' + x + '" y="' + y + '" width="14" height="14" fill="url(#dots)"/>');
  });
});
s.push('<path d="M607 452V141H921V452" fill="none" stroke="#aaa" stroke-width="1.200"/><path d="M607 451.500H921" stroke="#aaa" stroke-width="1.200"/>');
s.push('<circle cx="600" cy="134" r="4" fill="#f00"/>');
for (var i = 0; i < 22; i++) {
  var x = X0 + i * P;
  s.push('<text class="ax" x="' + x + '" y="136">' + (i + 1) + '</text><text class="ax" x="' + x + '" y="460">' + (i + 1) + '</text>');
}
ROWS.forEach(function (n, r) {
  var y = Y0 + r * P + 2;
  s.push('<text class="ax" x="598" y="' + y + '">' + n + '</text><text class="ax" x="923" y="' + y + '">' + n + '</text>');
});
var SW = ' stroke="#444" stroke-width="1.100"';
function label(x, y, t, col) {
  return '<text class="pl" x="' + x + '" y="' + (y + 2) + '" fill="' + col + '">' + t + '</text>';
}
function upTri(x, y, fill) {
  return '<path d="M' + (x - 7) + ' ' + (y + 6.5) + 'L' + (x + 7) + ' ' + (y + 6.5) + 'L' + x + ' ' + (y - 6.5) + 'Z" fill="' + fill + '"' + SW + '/>';
}
function downTri(x, y) {
  return '<path d="M' + (x - 7) + ' ' + (y - 6.5) + 'L' + (x + 7) + ' ' + (y - 6.5) + 'L' + x + ' ' + (y + 6.5) + 'Z" fill="#fff"' + SW + '/>';
}
function circ(x, y, fill) {
  return '<circle cx="' + x + '" cy="' + y + '" r="6" fill="' + fill + '"' + SW + '/>';
}
function hex(x, y, fill) {
  return '<path d="M' + (x - 6.5) + ' ' + y + 'L' + (x - 3.5) + ' ' + (y - 5.8) + 'H' + (x + 3.5) + 'L' + (x + 6.5) + ' ' + y + 'L' + (x + 3.5) + ' ' + (y + 5.8) + 'H' + (x - 3.5) + 'Z" fill="' + fill + '"' + SW + '/>' +
    '<path d="M' + (x - 8) + ' ' + y + 'h2" stroke="#222"/>';
}
function clk(x, y, dark, mode) {
  var st = dark ? "#ddd" : "#666";
  var d = mode === "up" ? "M" + (x - 2.5) + " " + (y + 5) + "V" + (y - 3) + "H" + (x + 3) + "V" + (y + 5) : "M" + (x - 2.5) + " " + (y - 5) + "V" + (y + 3) + "H" + (x + 3) + "V" + (y + 5);
  return '<rect x="' + (x - 6) + '" y="' + (y - 6) + '" width="12" height="12" fill="' + (dark ? "#7a0000" : "#fff") + '" stroke="#666" stroke-width="1.200"/><path d="' + d + '" fill="none" stroke="' + st + '"/>';
}
var RED = "#e02020", BLUE = "#2030d0", YEL = "#c8a800";
PINS.forEach(function (line, r) {
  var tokens = line.split(" "), y = Y0 + r * P;
  tokens.forEach(function (t, c) {
    var x = X0 + c * P, letter;
    switch (t[0]) {
      case "q": case "s": case "l": case "c":
        letter = { q:"Q", s:"S", l:"L", c:"C" }[t];
        s.push(circ(x, y, "#fff") + label(x, y, letter, RED)); break;
      case "n": case "p":
        s.push(hex(x, y, "#fff") + label(x, y, t, RED)); break;
      case "u": s.push(circ(x, y, "#fff")); break;
      case "U": s.push(circ(x, y, "#7a0000")); break;
      case "Q": s.push(circ(x, y, "#7a0000") + label(x, y, "Q", "#fff")); break;
      case "S": s.push(circ(x, y, "#7a0000") + label(x, y, "S", "#fff")); break;
      case "N": s.push(hex(x, y, "#7a0000") + label(x, y, "n", "#fff")); break;
      case "P": s.push(hex(x, y, "#7a0000") + label(x, y, "p", "#fff")); break;
      case "v": s.push(downTri(x, y)); break;
      case "x": s.push(downTri(x, y) + label(x, y - 1, "A", BLUE)); break;
      case "_": s.push(upTri(x, y, "#fff")); break;
      case "^": s.push(upTri(x, y, "#fff") + label(x, y + 1, "Q", BLUE)); break;
      case "A": s.push(upTri(x, y, "#fff") + label(x, y + 1, "A", BLUE)); break;
      case "I": s.push(upTri(x, y, "#fff") + label(x, y + 1, "I", BLUE)); break;
      case "T":
        s.push(upTri(x, y, "#fff") + '<path d="M' + (x - 7) + ' ' + (y + 6.5) + 'L' + (x - 4.5) + ' ' + (y + 2) + 'H' + (x + 4.5) + 'L' + (x + 7) + ' ' + (y + 6.5) + 'Z" fill="#777" stroke="#555"/>'); break;
      case "D":
        s.push(upTri(x, y, "#7a0000") + '<path d="M' + (x - 7) + ' ' + (y + 6.5) + 'L' + (x - 4.5) + ' ' + (y + 2) + 'H' + (x + 4.5) + 'L' + (x + 7) + ' ' + (y + 6.5) + 'Z" fill="#777" stroke="#555"/>'); break;
      case "K": s.push(clk(x, y, false, r % 2 ? "up" : "dn")); break;
      case "B": s.push(clk(x, y, true, "dn")); break;
      case "d":
        s.push('<path d="M' + (x - 7) + ' ' + y + 'L' + x + ' ' + (y - 7) + 'L' + (x + 7) + ' ' + y + 'L' + x + ' ' + (y + 7) + 'Z" fill="#fff" stroke="#777"/>' + label(x, y, t[1], YEL)); break;
    }
  });
});
function block(x, y, fill, l1, l2, l3) {
  var o = '<rect x="' + x + '" y="' + y + '" width="42" height="15" fill="' + fill + '" stroke="#aaa" stroke-width="1.400"/>';
  o += '<text class="bl" x="' + (x + 21) + '" y="' + (y + 5) + '">' + l1 + '</text>';
  o += '<text class="bl" x="' + (x + 21) + '" y="' + (y + 9) + '">' + l2 + '</text>';
  if (l3) o += '<text class="bl" x="' + (x + 21) + '" y="' + (y + 13) + '">' + l3 + '</text>';
  return o;
}
s.push(block(685, 114, COLORS.y, "IOBANK_8", "(assigned voltage)", "(vref assigned)"));
s.push(block(797, 114, COLORS.g, "IOBANK_7", "(assigned voltage)", "(vref assigned)"));
s.push(block(551, 241, COLORS.c, "IOBANK_1", "(assigned voltage)", "(vref assigned)"));
s.push(block(931, 241, COLORS.h, "IOBANK_6", "(assigned voltage)", "(vref assigned)"));
s.push(block(551, 339, COLORS.e, "IOBANK_2", "(assigned voltage)"));
s.push(block(685, 465, COLORS.k, "IOBANK_3", "(assigned voltage)"));
s.push(block(797, 465, COLORS.m, "IOBANK_4", "(assigned voltage)", "(vref assigned)"));
document.getElementById("pkg").innerHTML = s.join("");
```
